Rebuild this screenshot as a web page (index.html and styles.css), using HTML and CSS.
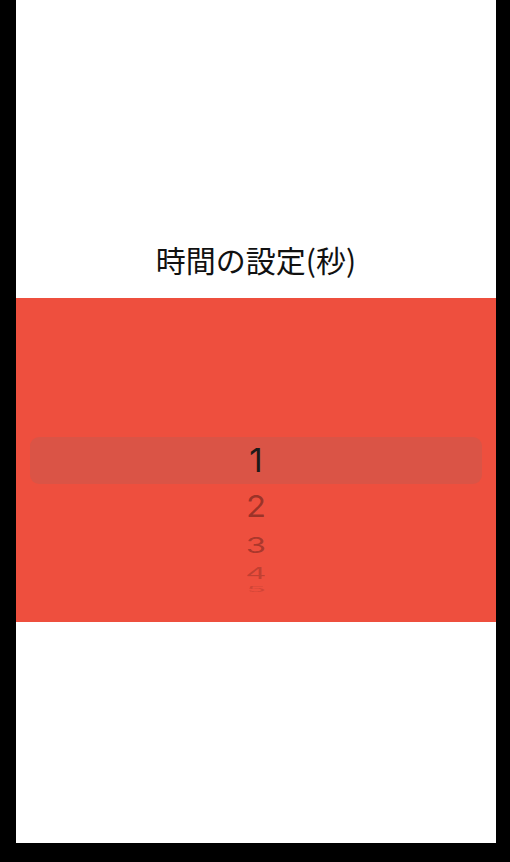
FILE: index.html
```html
<!DOCTYPE html>
<html lang="ja">
<head>
<meta charset="utf-8">
<link rel="stylesheet" href="styles.css">
</head>
<body>
<div class="screen">
  <div class="header">
    <div class="title">時間の設定(秒)</div>
  </div>
  <div class="picker">
    <div class="row r1 selected"><span>1</span></div>
    <div class="row r2"><span>2</span></div>
    <div class="row r3"><span>3</span></div>
    <div class="row r4"><span>4</span></div>
    <div class="row r5"><span>5</span></div>
  </div>
</div>
</body>
</html>
```
FILE: styles.css
```css
html, body {
  margin: 0;
  padding: 0;
  background: #000;
  height: 862px;
  overflow: hidden;
}
.screen {
  width: 480px;
  height: 843px;
  margin-left: 16px;
  background: #fff;
  display: flex;
  flex-direction: column;
}
.header {
  height: 298px;
  flex-shrink: 0;
}
.title {
  margin-top: 236px;
  height: 46px;
  line-height: 46px;
  text-align: center;
  font-family: "Noto Sans CJK JP", "Noto Sans", sans-serif;
  font-size: 30px;
  color: #111;
}
.picker {
  height: 324px;
  flex-shrink: 0;
  background: #ee4f3e;
  padding: 139px 14px 0;
  box-sizing: border-box;
  display: flex;
  flex-direction: column;
}
.row {
  display: flex;
  align-items: center;
  justify-content: center;
  flex-shrink: 0;
  font-family: Inter, Roboto, sans-serif;
  font-size: 33px;
}
.row span {
  line-height: 1;
  flex-shrink: 0;
  display: block;
}
.selected {
  background: #da5446;
  border-radius: 9px;
}
.r1 { height: 47px; color: #1c1a19; }
.r2 { height: 44px; color: rgba(0,0,0,0.36); }
.r3 { height: 34px; color: rgba(0,0,0,0.3); }
.r4 { height: 23px; color: rgba(0,0,0,0.2); }
.r5 { height: 9px; color: rgba(0,0,0,0.13); }
.r2 span { transform: scaleY(0.92); }
.r3 span { transform: scaleY(0.67); }
.r4 span { transform: scaleY(0.46); }
.r5 span { transform: scaleY(0.21); }
```
